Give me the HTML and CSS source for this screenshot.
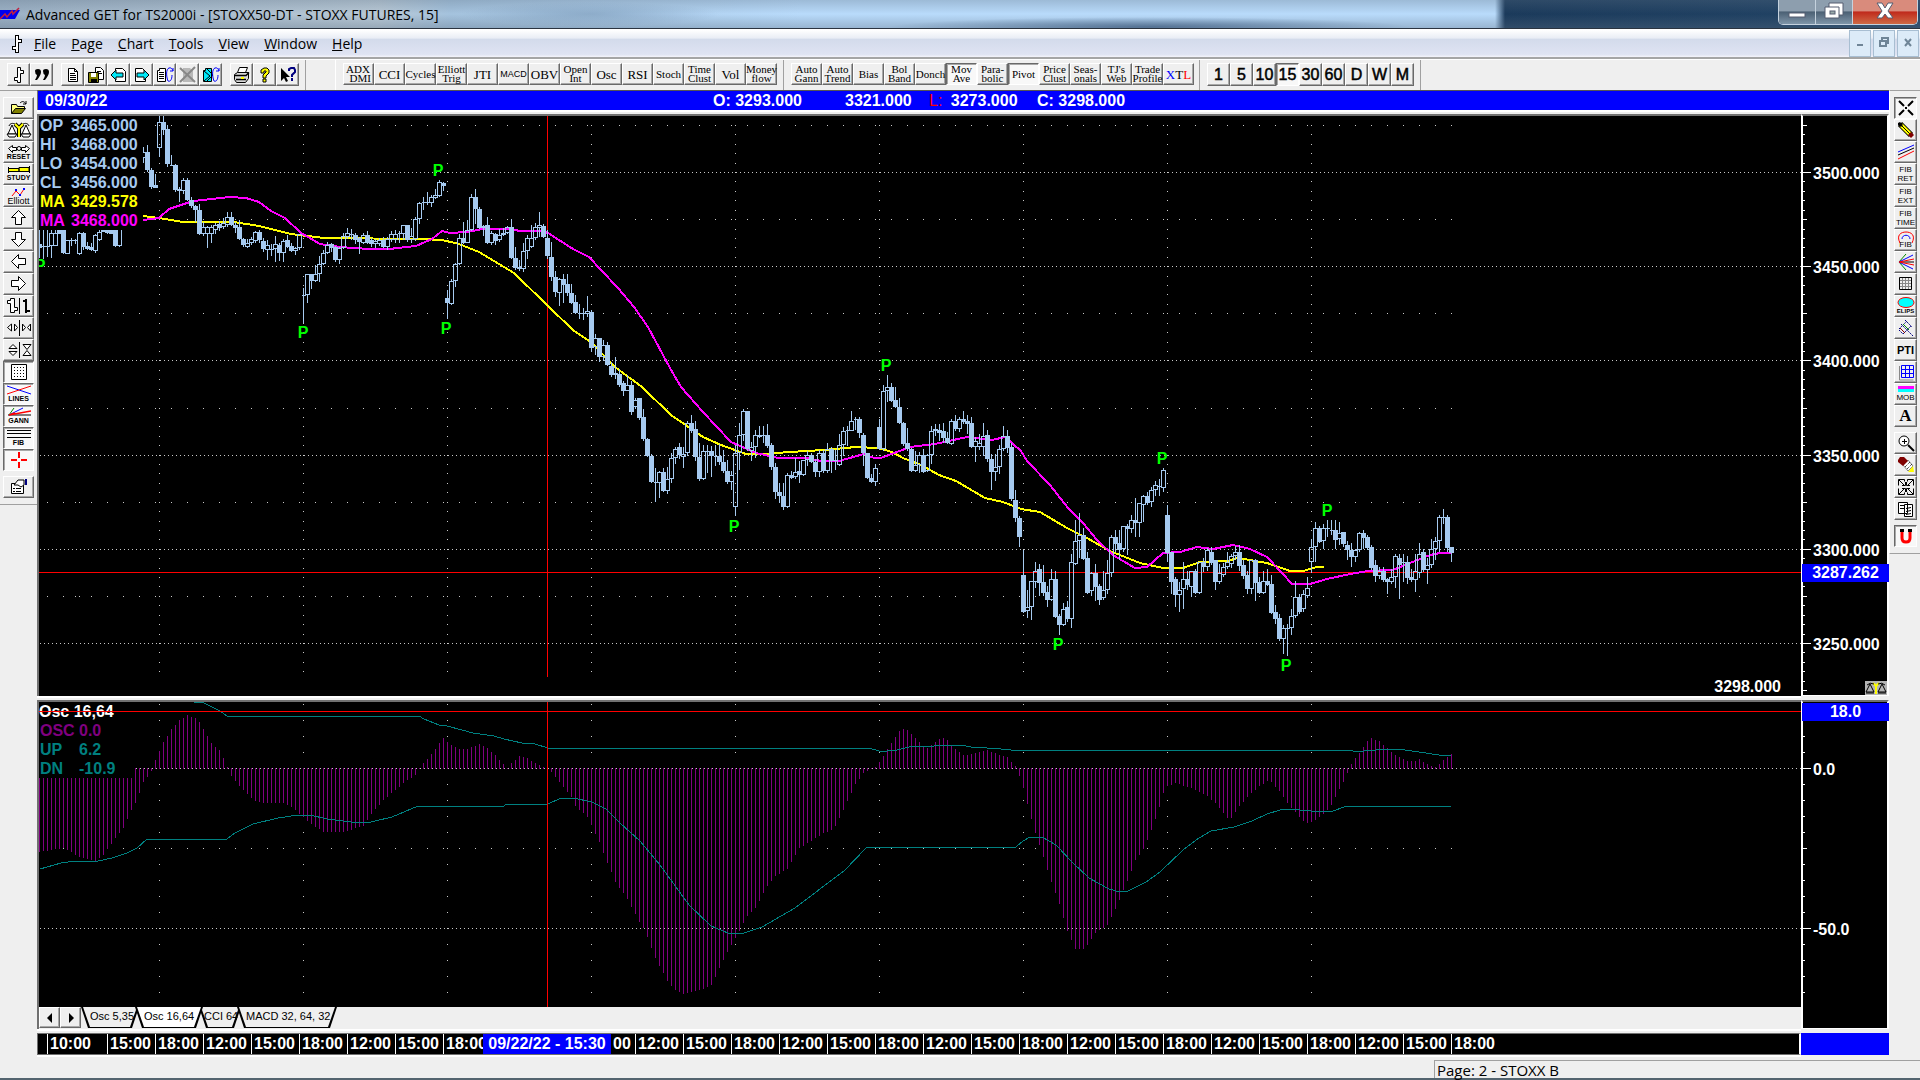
FILE: index.html
```html
<!DOCTYPE html>
<html lang="en">
<head>
    <meta charset="UTF-8">
    <meta name="viewport" content="width=device-width, initial-scale=1.0">
    <title>Advanced GET for TS2000i - [STOXX50-DT - STOXX FUTURES, 15]</title>
    <link rel="stylesheet" href="styles.css">
</head>
<body>
    <header class="titlebar">
        <svg class="app-icon" viewBox="0 0 20 16"><path d="M0 4h20l-5 9H0z" fill="#0000f0"/><path d="M0 13l5-5 2 3 5-6 1 3 6-6" fill="none" stroke="#c02040" stroke-width="1.5"/></svg>
        <h1 class="title">Advanced GET for TS2000i - [STOXX50-DT - STOXX FUTURES, 15]</h1>
        <div class="window-buttons">
            <button class="win-btn" aria-label="Minimize"><svg width="20" height="18"><rect x="2" y="11" width="16" height="4" fill="#fff" stroke="#555c70"/></svg></button>
            <button class="win-btn" aria-label="Restore"><svg width="20" height="18"><path d="M5 1h14v12h-4v3H1V5h4z" fill="#fff" stroke="#555c70"/><rect x="6" y="9" width="5" height="3" fill="#9aa" stroke="#555c70"/><path d="M5 5h10v8" fill="none" stroke="#555c70"/></svg></button>
            <button class="win-btn win-close" aria-label="Close"><svg width="20" height="18"><path d="M2 1h5l3 5 3-5h5l-5 8 5 7h-5l-3-4-3 4H2l5-7z" fill="#fff" stroke="#555c70"/></svg></button>
        </div>
    </header>

    <nav class="menubar">
        <svg class="doc-icon" width="12" height="20" shape-rendering="crispEdges"><path d="M4.500 1.500h3v4h3v3h-3v10h-3v-3h-3v-3h3z" fill="#fff" stroke="#000"/></svg>
        <a href="#"><u>F</u>ile</a>
        <a href="#"><u>P</u>age</a>
        <a href="#"><u>C</u>hart</a>
        <a href="#"><u>T</u>ools</a>
        <a href="#"><u>V</u>iew</a>
        <a href="#"><u>W</u>indow</a>
        <a href="#"><u>H</u>elp</a>
        <div class="mdi-buttons">
            <button class="mdi-btn" aria-label="Minimize page"><svg width="12" height="12"><path d="M3 9h6" stroke="#6f8597" stroke-width="2"/></svg></button>
            <button class="mdi-btn" aria-label="Restore page"><svg width="12" height="12"><path d="M4 4V2h6v5H8M2 5h6v5H2z" fill="none" stroke="#6f8597" stroke-width="2"/></svg></button>
            <button class="mdi-btn" aria-label="Close page"><svg width="12" height="12"><path d="M3 3l6 7M9 3l-6 7" stroke="#6f8597" stroke-width="2"/></svg></button>
        </div>
    </nav>

    <div class="toolbar">
        <div class="tool-group group-file">
            <button class="tb sq" aria-label="Bar"><svg width="18" height="18"><path d="M7.500 1.500h3v3h3v3h-3v9h-3v-2h-3v-3h3z" fill="#fff" stroke="#000"/></svg></button>
            <button class="tb sq" aria-label="Quotes"><svg width="18" height="18"><path d="M2 5q0-2 3-2t3 3-4 8H2q2-3 2-5-2-1-2-4zM10 5q0-2 3-2t3 3-4 8h-2q2-3 2-5-2-1-2-4z" fill="#000"/></svg></button>
            <span class="tool-space"></span>
            <button class="tb sq" aria-label="New page"><svg width="18" height="18"><path d="M4.500 2.500h6l3 3v10h-9z" fill="#fff" stroke="#000"/><path d="M10.500 2.500v3h3M6 7.500h5M6 9.500h6M6 11.500h6M6 13.500h6" fill="none" stroke="#000"/></svg></button>
            <button class="tb sq" aria-label="Save page"><svg width="18" height="18"><path d="M8.500 1.500h5l3 3v9h-8z" fill="#fff" stroke="#000"/><path d="M10 5.500h4M10 7.500h5" stroke="#000"/><path d="M1.500 6.500h10v10h-10z" fill="#808000" stroke="#000"/><path d="M4 7h5v4H4z" fill="#fff"/><path d="M4 13h6v4H4z" fill="#000"/></svg></button>
            <button class="tb sq" aria-label="Previous page"><svg width="18" height="18"><path d="M5.500 2.500h7l3 3v10h-10z" fill="#fff" stroke="#000"/><path d="M1 9l5-5v3h7v4H6v3z" fill="#00e8f8" stroke="#000"/></svg></button>
            <button class="tb sq" aria-label="Next page"><svg width="18" height="18"><path d="M2.500 2.500h7l3 3v10h-10z" fill="#fff" stroke="#000"/><path d="M16 9l-5-5v3H4v4h7v3z" fill="#00e8f8" stroke="#000"/></svg></button>
            <button class="tb sq" aria-label="Refresh page"><svg width="18" height="18"><path d="M1.500 4.500h2v-2h6v13h-8z" fill="#fff" stroke="#000"/><path d="M3 6.500h5M3 8.500h5M3 10.500h5M3 12.500h5" stroke="#000"/><path d="M12 15c-2-5-2-12 1-13s4 3 4 3M14 5h3V2M12 15c2 1 4-1 4-6" fill="none" stroke="#00f"/></svg></button>
            <button class="tb sq" aria-label="Delete page"><svg width="18" height="18"><path d="M4 2h7l3 3v11H4z" fill="#b8b8b8"/><path d="M1 2l15 14M16 1L1 16" stroke="#888" stroke-width="2"/></svg></button>
            <button class="tb sq" aria-label="Refresh all"><svg width="18" height="18"><path d="M1.500 4.500h2v-2h6v13h-8z" fill="#00e8f8" stroke="#000"/><path d="M2 5l6 5-6 5M5 3l6 6-6 6" fill="none" stroke="#000"/><path d="M12 15c-2-5-2-12 1-13s4 3 4 3M14 5h3V2M12 15c2 1 4-1 4-6" fill="none" stroke="#00f"/></svg></button>
            <span class="tool-space"></span>
            <button class="tb sq" aria-label="Print"><svg width="18" height="18"><path d="M6.500 1.500h8l-2 5h-8z" fill="#fff" stroke="#000"/><path d="M1.500 8.500l3-2h11v6l-3 4h-9l-2-3z" fill="#d8d8d8" stroke="#000"/><path d="M2 9.500h11l3-3M3 13.500h10" fill="none" stroke="#000" stroke-width="1.500"/><path d="M8 11h3v2H8z" fill="#ff0"/></svg></button>
            <button class="tb sq" aria-label="Help topics"><svg width="18" height="18"><path d="M5 7V4l3-2h3l2 2v3l-3 3v2H7V9l3-3V5H8v2zM7 13h3v3H7z" fill="#ff0" stroke="#000"/></svg></button>
            <button class="tb sq" aria-label="Context help"><svg width="18" height="18"><path d="M2 2v13l3-3 2 4 2-1-2-4h4z" fill="#000"/><path d="M10 5V3l2-1h3l1 2v2l-3 3v2M13 12v3" fill="none" stroke="#000080" stroke-width="2"/></svg></button>
        </div>
        <div class="tool-group group-study">
            <button class="tb adx"><span>ADX</span><span>DMI</span></button>
            <button class="tb big">CCI</button>
            <button class="tb">Cycles</button>
            <button class="tb">Elliott<br>Trig</button>
            <button class="tb big">JTI</button>
            <button class="tb sans">MACD</button>
            <button class="tb big">OBV</button>
            <button class="tb">Open<br>Int</button>
            <button class="tb big">Osc</button>
            <button class="tb big">RSI</button>
            <button class="tb">Stoch</button>
            <button class="tb">Time<br>Clust</button>
            <button class="tb big">Vol</button>
            <button class="tb">Money<br>flow</button>
        </div>
        <div class="tool-group group-overlay">
            <button class="tb">Auto<br>Gann</button>
            <button class="tb">Auto<br>Trend</button>
            <button class="tb">Bias</button>
            <button class="tb">Bol<br>Band</button>
            <button class="tb">Donch</button>
            <button class="tb pressed" aria-pressed="true">Mov<br>Ave</button>
            <button class="tb">Para-<br>bolic</button>
            <button class="tb pressed" aria-pressed="true">Pivot</button>
            <button class="tb">Price<br>Clust</button>
            <button class="tb">Seas-<br>onals</button>
            <button class="tb">TJ's<br>Web</button>
            <button class="tb">Trade<br>Profile</button>
            <button class="tb big xtl"><i>X</i>T<b>L</b></button>
        </div>
        <div class="tool-group group-period">
            <button class="tb sq period">1</button>
            <button class="tb sq period">5</button>
            <button class="tb sq period">10</button>
            <button class="tb sq period pressed" aria-pressed="true">15</button>
            <button class="tb sq period">30</button>
            <button class="tb sq period">60</button>
            <button class="tb sq period">D</button>
            <button class="tb sq period">W</button>
            <button class="tb sq period">M</button>
        </div>
    </div>

    <main class="workspace">
        <aside class="side side-left">
            <button class="tb" aria-label="Open"><svg width="24" height="16"><path d="M4.500 13.500v-9h5l1 2h7v3" fill="#ffff80" stroke="#000"/><path d="M4.500 13.500l4-5h10l-4 5z" fill="#808000" stroke="#000"/><path d="M13 3c2-2 4-2 6 1M19 1v3h-3" fill="none" stroke="#000"/></svg></button>
            <button class="tb" aria-label="Scales"><svg width="26" height="18"><path d="M9 3l4 4 4-4M13 6v10" fill="none" stroke="#000" stroke-width="4"/><path d="M9 3l4 4 4-4M13 6v10" fill="none" stroke="#ff0" stroke-width="2"/><path d="M3 5c1-3 4-3 6-2M23 5c-1-3-4-3-6-2" fill="none" stroke="#000"/><path d="M6 4l-4 9h8zM20 4l-4 9h8z" fill="#fff" stroke="#000"/><path d="M1 13h10l-2 3H3zM15 13h10l-2 3h-6z" fill="#fff" stroke="#000"/></svg></button>
            <button class="tb col"><svg width="24" height="9"><path d="M1.500 4.500l4-3v2h4v3h-4v2zM22.500 4.500l-4-3v2h-4v3h4v2z" fill="#fff" stroke="#000"/><circle cx="12" cy="4.500" r="2" fill="#fff" stroke="#000"/></svg><span>RESET</span></button>
            <button class="tb col"><svg width="24" height="8"><path d="M1.500 1v6M22.500 0v7M2 2.500h10v3H2M12 1.500h10v4H12z" fill="#ff0" stroke="#000"/></svg><span>STUDY</span></button>
            <button class="tb col"><svg width="24" height="9"><path d="M5 8l4-5 4 4 4-6" fill="none" stroke="#f00"/><path d="M8 1h2v2H8zM12 6h2v2h-2zM16 0h2v2h-2z" fill="#00f"/></svg><span class="mixed">Elliott</span></button>
            <button class="tb" aria-label="Up"><svg width="18" height="18"><path d="M8.500 1.500l7 7h-4v7h-6v-7h-4z" fill="#fff" stroke="#000"/></svg></button>
            <button class="tb" aria-label="Down"><svg width="18" height="18"><path d="M8.500 15.500l7-7h-4v-7h-6v7h-4z" fill="#fff" stroke="#000"/></svg></button>
            <button class="tb" aria-label="Left"><svg width="18" height="18"><path d="M1.500 8.500l7-7v4h7v6h-7v4z" fill="#fff" stroke="#000"/></svg></button>
            <button class="tb" aria-label="Right"><svg width="18" height="18"><path d="M15.500 8.500l-7-7v4h-7v6h7v4z" fill="#fff" stroke="#000"/></svg></button>
            <button class="tb" aria-label="Bar style"><svg width="26" height="18"><path d="M4.500 1.500h4v9h3v3h-3v2h-4v-9h-3v-3h3z" fill="#fff" stroke="#000"/><path d="M13.500 1v16" stroke="#000"/><path d="M20 2v14M17 4h3M20 14h4" stroke="#000" stroke-width="2"/></svg></button>
            <button class="tb" aria-label="Horizontal spacing"><svg width="26" height="18"><path d="M13.500 1v16M5.500 5v7l-4-3.500zM8.500 5v7l3-3.500zM16.500 5v7l3-3.500zM24.500 5v7l-3-3.500z" fill="#fff" stroke="#000"/></svg></button>
            <button class="tb" aria-label="Vertical spacing"><svg width="26" height="18"><path d="M13.500 1v16M3 7.500h8l-4-4zM3 10.500h8l-4 4zM17 3.500h8l-4 5zM17 14.500h8l-4-5z" fill="#fff" stroke="#000"/></svg></button>
            <button class="tb pressed" aria-pressed="true" aria-label="Grid"><svg width="18" height="18"><path d="M1.500 1.500h15v15h-15z" fill="#fff" stroke="#000"/><path d="M4 4.500h12M4 7.500h12M4 10.500h12M4 13.500h12" stroke="#000" stroke-dasharray="1 2"/></svg></button>
            <button class="tb col pressed" aria-pressed="true"><svg width="24" height="10"><path d="M0 1l24 8" stroke="#00f"/><path d="M0 9l24-8" stroke="#f00"/></svg><span>LINES</span></button>
            <button class="tb col pressed" aria-pressed="true"><svg width="24" height="10"><path d="M1 8h23" stroke="#000"/><path d="M2 8l5-7" stroke="#080"/><path d="M2 8l14-7" stroke="#00f"/><path d="M2 8l22-4M2 8l6-2" stroke="#f00" stroke-width="1.500"/></svg><span>GANN</span></button>
            <button class="tb col pressed" aria-pressed="true"><svg width="24" height="10"><path d="M0 1.500h24M0 4.500h24M0 8.500h24" stroke="#000"/></svg><span>FIB</span></button>
            <button class="tb pressed" aria-pressed="true" aria-label="Crosshair"><svg width="18" height="18"><path d="M1 9h6M11 9h6M9 1v6M9 11v6" stroke="#f00" stroke-width="2"/></svg></button>
            <span class="side-space"></span>
            <button class="tb" aria-label="Properties"><svg width="20" height="18"><path d="M2.500 5.500h12v10h-12z" fill="#fff" stroke="#000"/><path d="M4 10.500h2M7 10.500h5M4 13.500h2M7 13.500h5M5 7l4-5h6v5l-3 2-3-2z" fill="#fff" stroke="#000"/><path d="M16 1h2v6h-2z" fill="#000080"/></svg></button>
        </aside>

        <section class="charts">
            <div class="infobar">
                <span class="info-date">09/30/22</span>
                <span class="info-open">O: 3293.000</span>
                <span class="info-high">3321.000</span>
                <span class="info-low"><em>L:</em> 3273.000</span>
                <span class="info-close">C: 3298.000</span>
            </div>

            <div class="pane price-pane">
                <svg class="plot" id="price"></svg>
                <dl class="readout">
                    <dt>OP</dt><dd>3465.000</dd>
                    <dt>HI</dt><dd>3468.000</dd>
                    <dt>LO</dt><dd>3454.000</dd>
                    <dt>CL</dt><dd>3456.000</dd>
                    <dt class="ma1">MA</dt><dd class="ma1">3429.578</dd>
                    <dt class="ma2">MA</dt><dd class="ma2">3468.000</dd>
                </dl>
                <span class="last-price">3298.000</span>
            </div>
            <div class="axis price-axis">
                <svg class="plot" id="priceScale"></svg>
                <span class="axis-mark price-mark">3287.262</span>
                <svg class="scales-badge" width="22" height="14"><path d="M0 0h22v14H0z" fill="#b4b4b4"/><path d="M8 2l3 3 3-3M11 5v8" fill="none" stroke="#ff0" stroke-width="2"/><path d="M2 4q3-3 7-1M20 4q-3-3-7-1M5 3l-4 8h8zM17 3l-4 8h8zM1 12h8M13 12h8" fill="none" stroke="#000"/></svg>
            </div>

            <div class="pane osc-pane">
                <div class="osc-body">
                    <svg class="plot" id="osc"></svg>
                    <div class="readout osc-readout">
                        <h2>Osc 16,64</h2>
                        <dl>
                            <dt class="osc">OSC</dt><dd class="osc">0.0</dd>
                            <dt>UP</dt><dd>6.2</dd>
                            <dt>DN</dt><dd>-10.9</dd>
                        </dl>
                    </div>
                    <span class="osc-cross"></span>
                </div>
                <div class="tabs">
                    <button class="tb tab-nav" aria-label="Previous tab"><svg width="8" height="10"><path d="M6 0v10L1 5z"/></svg></button>
                    <button class="tb tab-nav" aria-label="Next tab"><svg width="8" height="10"><path d="M2 0v10l5-5z"/></svg></button>
                    <button class="tab tab-osc5"><span>Osc 5,35</span></button>
                    <button class="tab tab-osc16 active"><span>Osc 16,64</span></button>
                    <button class="tab tab-cci"><span>CCI 64</span></button>
                    <button class="tab tab-macd"><span>MACD 32, 64, 32</span></button>
                </div>
            </div>
            <div class="axis osc-axis">
                <svg class="plot" id="oscScale"></svg>
                <span class="axis-mark osc-mark">18.0</span>
            </div>

            <div class="time-axis" id="times"></div>
            <div class="time-corner"></div>
        </section>

        <aside class="side side-right">
            <button class="tb pressed" aria-pressed="true" aria-label="Pointer"><svg width="18" height="18"><path d="M2 2l5 5M16 2l-5 5M2 16l5-5M16 16l-5-5" stroke="#000" stroke-width="2"/><path d="M8 8h2v2H8z"/></svg></button>
            <button class="tb" aria-label="Pencil"><svg width="18" height="18"><path d="M3 3l11 11" stroke="#000" stroke-width="6"/><path d="M4 4l9 9" stroke="#ff0" stroke-width="4"/><path d="M4 4l9 9" stroke="#000"/><path d="M1 2l2-1 3 3-2 2-3-2z"/><path d="M11 14l3-3 3 3-3 3z" fill="#800000"/></svg></button>
            <button class="tb" aria-label="Trend lines"><svg width="18" height="18"><path d="M1 9l16-7" stroke="#00f"/><path d="M1 12l16-7" stroke="#000"/><path d="M1 16l16-8" stroke="#f00"/></svg></button>
            <button class="tb fib">FIB<br>RET</button>
            <button class="tb fib">FIB<br>EXT</button>
            <button class="tb fib">FIB<br>TIME</button>
            <button class="tb fib fib-arc"><svg width="18" height="13"><path d="M3 12C-1 4 4 1 9 1s10 3 6 11" fill="none" stroke="#f00"/><path d="M5 8c0-5 8-5 8 0" fill="none" stroke="#00f"/></svg><span>FIB</span></button>
            <button class="tb" aria-label="Gann fan"><svg width="18" height="18"><path d="M2 9h15" stroke="#000"/><path d="M2 9l7-8M2 9l7 8" stroke="#080"/><path d="M2 9l14-7M2 9l14 7" stroke="#00f"/><path d="M2 9l15-3M2 9l15 3" stroke="#f00"/></svg></button>
            <button class="tb" aria-label="Gann box"><svg width="16" height="16"><path d="M4.500 2v12M7.500 2v12M10.500 2v12M2 4.500h12M2 7.500h12M2 10.500h12" stroke="#888"/><path d="M1.500 1.500h12v12h-12z" fill="none" stroke="#000"/></svg></button>
            <button class="tb col"><svg width="18" height="11"><ellipse cx="9" cy="5.500" rx="8" ry="5" fill="#0ff" stroke="#f00"/></svg><span>ELIPS</span></button>
            <button class="tb" aria-label="Pitchfork"><svg width="18" height="18"><path d="M4 5l12 12M8 1l7 7M2 11l4 4M2 10l8-8M6 15l8-8" stroke="#000080" stroke-dasharray="2 1"/><path d="M6 5l6 6" stroke="#080"/><path d="M3 9l5 5" stroke="#800000"/></svg></button>
            <button class="tb pti">PTI</button>
            <button class="tb" aria-label="Time grid"><svg width="18" height="18"><path d="M4.500 2.500h12v12h-12zM8.500 2v13M12.500 2v13M4 6.500h13M4 10.500h13" fill="none" stroke="#00f"/><path d="M2.500 3v14h14" fill="none" stroke="#888"/></svg></button>
            <button class="tb col mob"><svg width="16" height="7"><path d="M0 0h16v3H0z" fill="#f0f"/><path d="M0 3h16v3H0z" fill="#0ff"/></svg><span>MOB</span></button>
            <button class="tb letter">A</button>
            <span class="side-space"></span>
            <button class="tb" aria-label="Zoom"><svg width="18" height="18"><circle cx="7" cy="7" r="5" fill="#fff" stroke="#000"/><path d="M5 7.500h5M7.500 5v5" stroke="#000"/><path d="M11 11l6 6" stroke="#000" stroke-width="2"/></svg></button>
            <button class="tb" aria-label="Eraser"><svg width="18" height="18"><path d="M6 9l5-5 5 6-5 5z" fill="#fff" stroke="#888"/><path d="M1 4l2-3h4l4 4-5 5-5-4z" fill="#800000"/><path d="M8 11l5-5M10 13l5-5" stroke="#000" stroke-dasharray="1 1"/><path d="M11 16l5-6 1 6z" fill="#ff0"/></svg></button>
            <button class="tb" aria-label="Expand"><svg width="18" height="18"><path d="M1.500 7.500v-6h6v2M10.500 3.500v-2h6v6M1.500 10.500v6h6v-2M10.500 14.500v2h6v-6M2 2l6 6M16 2l-6 6M2 16l6-6M16 16l-6-6M8.500 4v3.500H5M9.500 4v3.500H13M8.500 14v-3.500H5M9.500 14v-3.500H13" fill="none" stroke="#000"/></svg></button>
            <button class="tb" aria-label="Copy"><svg width="18" height="18"><path d="M1.500 2.500h9v11h-9zM7.500 4.500h8v12h-8z" fill="#fff" stroke="#000"/><path d="M3 5.500h4M3 8.500h4M9 8.500l5-1M9 11.500l5-1M9 14.500l5-1" stroke="#000"/></svg></button>
            <span class="side-space"></span>
            <button class="tb pressed" aria-pressed="true" aria-label="Magnet"><svg width="18" height="18"><path d="M5 4v7q0 4 4 4t4-4V4" fill="none" stroke="#f00" stroke-width="3"/><path d="M3 2h4v3H3zM11 2h4v3h-4z"/></svg></button>
        </aside>
    </main>

    <footer class="statusbar">
        <span class="status-page">Page: 2 - STOXX B</span>
    </footer>

    <script src="chart.js"></script>
</body>
</html>
```
FILE: styles.css
```css
* {
    box-sizing: border-box;
}
body {
    margin: 0;
    height: 100vh;
    display: flex;
    flex-direction: column;
    overflow: hidden;
    background-color: #efefef;
    color: #000;
    font-family: "Liberation Sans", Arial, sans-serif;
}
button {
    padding: 0;
    margin: 0;
    border: none;
    font-family: inherit;
    color: inherit;
}

/* title bar and menu */
.titlebar {
    height: 29px;
    flex: none;
    display: flex;
    align-items: center;
    border-bottom: 1px solid #2b3440;
    background:
        radial-gradient(ellipse 130px 12px at 590px 14px, rgba(110, 140, 170, 0.5), transparent),
        radial-gradient(ellipse 260px 10px at 1150px 27px, rgba(60, 90, 125, 0.75), transparent),
        linear-gradient(180deg, rgba(90, 110, 130, 0.3), transparent 50%, rgba(90, 110, 130, 0.35)),
        linear-gradient(90deg, #9db2c6 0, #b9c9d6 380px, #a5c3de 450px, #b9dbfb 800px, #b9dbfb 1495px, #1b3a5b 1505px, #234567 100%);
}
.app-icon {
    width: 20px;
    height: 16px;
    flex: none;
}
.title {
    flex: 1;
    margin: 0;
    padding-left: 6px;
    font: 14px "Open Sans", sans-serif;
}
.window-buttons {
    display: flex;
    align-self: flex-start;
    height: 25px;
    margin-right: 2px;
    border: 1px solid #c5d2de;
    border-top: none;
    border-radius: 0 0 5px 5px;
    overflow: hidden;
}
.win-btn {
    width: 37px;
    border-right: 1px solid #c5d2de;
    background: linear-gradient(#8d9eae 45%, #4b6074 50%, #7f95a8);
}
.win-close {
    width: 64px;
    border-right: none;
    background: linear-gradient(#d98b7c 45%, #c02a1c 50%, #cf6a45);
}
.menubar {
    height: 30px;
    flex: none;
    display: flex;
    align-items: center;
    gap: 15px;
    padding: 0 1px 0 11px;
    border-top: 1px solid #fff;
    border-bottom: 2px solid #a5a5a5;
    background: linear-gradient(#fff, #e9edf5 30%, #d3dbeb 34%, #dfe3f2 90%, #f4f4fa);
}
.menubar a {
    color: #000;
    text-decoration: none;
    font: 14px "Open Sans", sans-serif;
}
.doc-icon {
    margin-right: -4px;
}
.mdi-buttons {
    display: flex;
    gap: 2px;
    margin-left: auto;
}
.mdi-btn {
    width: 22px;
    height: 27px;
    border: 1px solid #a8bed2;
    background-color: #dcebf8;
}

/* raised buttons shared by all the tool bars */
.tb {
    width: 31px;
    height: 22px;
    flex: none;
    display: flex;
    align-items: center;
    justify-content: center;
    border: 1px solid;
    border-color: #fff #696969 #696969 #fff;
    box-shadow: inset -1px -1px 0 #a8a8a8;
    background-color: #efefef;
    font: 11px/9px "Liberation Serif", serif;
    text-align: center;
}
.tb.pressed {
    border-color: #696969 #fff #fff #696969;
    box-shadow: inset 1px 1px 0 #a8a8a8;
    background-color: #f8f8f8;
}
.tb.sq {
    width: 23px;
    height: 23px;
}
.tb.big {
    font-size: 13px;
}
.tb.sans {
    font: 9px "Liberation Sans", sans-serif;
}
.tb.adx {
    flex-direction: column;
}
.adx span:first-child {
    align-self: flex-start;
    padding-left: 2px;
}
.adx span:last-child {
    align-self: flex-end;
    padding-right: 2px;
}
.tb.period {
    font: 16px "Liberation Sans", sans-serif;
    -webkit-text-stroke: 0.5px #000;
}
.xtl i {
    color: #00f;
    font-style: normal;
}
.xtl b {
    color: #f00;
    font-weight: normal;
}
.tb.col {
    flex-direction: column;
    font: bold 7px/8px "Liberation Sans", sans-serif;
}
.tb .mixed {
    font-size: 9px;
    font-weight: normal;
}
.toolbar {
    height: 31px;
    flex: none;
    display: flex;
    border-top: 1px solid #fff;
}
.tool-group {
    display: flex;
    align-items: flex-start;
    padding: 3px 6px 0 7px;
    border-right: 1px solid #a0a0a0;
}
.tool-space {
    width: 8px;
}
.group-file {
    margin-right: 29px;
}
.group-study {
    border-left: 1px solid #fff;
}
.group-overlay {
    padding-right: 5px;
}

/* workspace */
.workspace {
    flex: 1;
    min-height: 0;
    display: flex;
}
.side {
    flex: none;
    display: flex;
    flex-direction: column;
    align-self: flex-start;
    padding: 6px 0 6px 3px;
    border-top: 1px solid #a0a0a0;
    border-bottom: 1px solid #a0a0a0;
}
.side-left {
    width: 37px;
}
.side-right {
    width: 31px;
    padding-left: 4px;
    border-left: 1px solid #fff;
}
.side-right .tb {
    width: 23px;
}
.side-space {
    height: 5px;
}
.side-right .fib {
    font: 8px/9px "Liberation Sans", sans-serif;
}
.tb.fib-arc {
    flex-direction: column;
}
.fib-arc span {
    margin-top: -4px;
}
.side-right .col {
    font-size: 6px;
    line-height: 7px;
}
.side-right .mob {
    font: 8px/10px "Liberation Sans", sans-serif;
}
.tb.pti {
    font: bold 11px "Liberation Sans", sans-serif;
}
.tb.letter {
    font: bold 17px "Liberation Serif", serif;
}
.charts {
    flex: 1;
    min-width: 0;
    display: grid;
    grid-template-columns: 1fr 88px;
    grid-template-rows: 20px minmax(0, 582fr) minmax(0, 329fr) 22px;
    row-gap: 4px;
    padding-bottom: 2px;
    font-size: 16px;
    font-weight: bold;
}
.infobar {
    grid-column: 1 / -1;
    display: flex;
    align-items: center;
    padding-left: 7px;
    border-top: 1px solid #555;
    border-left: 1px solid #777;
    box-shadow: 0 2px 0 #fff;
    background-color: #00f;
    color: #fff;
    line-height: 19px;
    white-space: pre;
}
.info-date {
    width: 668px;
}
.info-open {
    width: 132px;
}
.info-high {
    width: 84px;
}
.info-low {
    width: 108px;
}
.info-low em {
    color: #f00;
    font-style: normal;
    font-weight: normal;
    margin-right: 4px;
}
.pane {
    position: relative;
    min-width: 0;
    border-top: 2px solid #707070;
    border-left: 2px solid #707070;
    box-shadow: 0 2px 0 #fff;
    background-color: #000;
}
.plot {
    display: block;
    position: absolute;
    inset: 0;
    width: 100%;
    height: 100%;
    shape-rendering: crispEdges;
    font: bold 16px "Liberation Sans", Arial, sans-serif;
}
.readout {
    position: absolute;
    top: 0;
    left: 0;
    width: 104px;
    display: grid;
    grid-template-columns: 31px 1fr;
    margin: 0;
    padding-left: 1px;
    background-color: #000;
    color: #a6caf0;
    line-height: 19px;
}
.readout dd {
    margin: 0;
}
.readout .ma1 {
    color: #ff0;
}
.readout .ma2 {
    color: #f0f;
}
.osc-readout {
    display: block;
    width: 94px;
    padding-left: 0;
    color: #008080;
}
.osc-readout h2 {
    margin: 0;
    color: #fff;
    font-size: 16px;
}
.osc-readout dl {
    display: grid;
    grid-template-columns: 39px 1fr;
    margin: 0;
    padding-left: 1px;
}
.osc-readout .osc {
    color: #800080;
}
.osc-cross {
    position: absolute;
    top: 9px;
    left: 0;
    width: 100%;
    border-top: 1px solid #f00;
}
.last-price {
    position: absolute;
    right: 20px;
    bottom: 0;
    line-height: 18px;
    color: #fff;
}
.axis {
    position: relative;
    border: 2px solid #fff;
    border-top-color: #707070;
    border-bottom-width: 1px;
    background-color: #000;
}
.axis-mark {
    position: absolute;
    left: -1px;
    right: -2px;
    height: 18px;
    background-color: #00f;
    color: #fff;
    line-height: 18px;
    text-align: center;
}
.price-mark {
    top: 448px;
}
.osc-mark {
    top: 1px;
}
.scales-badge {
    position: absolute;
    right: 0;
    bottom: 0;
}
.osc-pane {
    display: flex;
    flex-direction: column;
}
.osc-body {
    position: relative;
    flex: 1;
}

/* study tabs */
.tabs {
    display: flex;
    height: 22px;
    background-color: #efefef;
}
.tab-nav {
    width: 21px;
    height: 21px;
}
.tab {
    position: relative;
    height: 21px;
    margin-right: -4px;
    padding: 0 0 4px 9px;
    background-color: #000;
    clip-path: polygon(0 0, 100% 0, calc(100% - 7px) 100%, 7px 100%);
    font-size: 11px;
    text-align: left;
}
.tab::before {
    content: "";
    position: absolute;
    inset: 0 2px 1px 2px;
    background-color: #efefef;
    clip-path: polygon(0 0, 100% 0, calc(100% - 7px) 100%, 7px 100%);
}
.tab span {
    position: relative;
}
.tab.active {
    z-index: 1;
}
.tab.active::before {
    background-color: #fff;
}
.tab-osc5 {
    width: 58px;
}
.tab-osc16 {
    width: 68px;
}
.tab-cci {
    width: 42px;
    padding-left: 5px;
}
.tab-macd {
    width: 100px;
}

/* time scale */
.time-axis {
    display: flex;
    min-width: 0;
    padding-left: 9px;
    border: 1px solid #707070;
    border-right: 2px solid #fff;
    box-shadow: 0 2px 0 #fff;
    background-color: #000;
    color: #fff;
    line-height: 20px;
    overflow: hidden;
}
.time-axis span {
    flex: none;
    width: 48px;
    padding-left: 2px;
    border-left: 1px solid #fff;
}
.time-axis .long {
    width: 60px;
}
/* labels on both sides of the cursor time */
.time-axis .cut {
    width: 40px;
    overflow: hidden;
}
.time-axis .rest {
    width: 24px;
    border-left: none;
}
.time-axis .time-mark {
    width: 128px;
    padding: 0;
    border: none;
    background-color: #00f;
    text-align: center;
}
.time-corner {
    background-color: #00f;
}

.statusbar {
    height: 23px;
    flex: none;
    display: flex;
    padding-top: 3px;
    border-bottom: 2px solid #53646f;
    font: 15px/18px "Open Sans", sans-serif;
}
.status-page {
    width: 486px;
    margin-left: auto;
    padding-left: 2px;
    border-top: 1px solid #a0a0a0;
    border-left: 1px solid #a0a0a0;
}
```
FILE: chart.js
```js
// window coordinates of the plot areas; one bar is 4px wide, 36 bars per day
const LEFT = 39, PRICE_TOP = 116, OSC_TOP = 702;
const FIRST_DAY = 159, DAY = 144, BAR = 4, LAST_BAR = 1451;

// one entry per bar: high, body top, body bottom, low ("-" closes lower, "+" higher)
// the first number is the bar index, day one starts at 0
const runs = [
    [-30, `-230 244 248 258,+230 246 247 259,+230 246 247 257,+230 233 246 258,+228 233 246 246,-225 225 234 234,-228 228 253 254,+240 240 254 254,+238 240 241 246,+239 240 241 244,+232 233 254 255,-232 233 247 250,-242 246 249 250,-243 247 250 251,+234 235 251 253,+230 232 240 241,-228 228 232 232,-228 228 233 234,-228 229 234 234,-229 230 246 247,+229 229 246 247`],
    [-4, `+147 152 158 163,-145 152 170 172,-168 170 187 189,-174 185 188 188`],
    [0, `+112 122 148 157,-112 122 130 135,-125 129 164 167,+155 165 166 166,-164 165 190 192,-187 189 191 202,+178 180 191 194,-178 180 200 201,-197 200 206 208,-205 206 210 222,-204 210 234 235,+222 227 234 236,+226 227 234 248,+225 227 234 243,+223 225 230 234,-221 224 228 231,+218 223 227 229,+212 217 225 227,-212 217 225 226,-222 225 228 233,-220 227 239 240,-238 239 245 247,+239 243 247 248,+237 239 243 245,+231 232 241 243,-230 232 240 243,-238 241 249 252,+240 245 250 260,+244 249 250 256,+236 244 249 262,-243 245 253 261,+239 241 253 262,-235 240 247 248,-243 246 251 252,+247 248 251 255,+234 234 248 250`],
    [36, `+288 295 296 323,+274 274 295 303,-274 274 281 289,+265 274 281 282,+256 264 274 282,+250 253 264 265,+242 245 253 254,-243 244 248 252,-246 247 260 262,+247 248 260 264,+233 236 248 249,+228 233 237 239,+229 234 235 240,-233 235 240 244,-237 238 242 254,+233 235 243 244,-231 235 243 244,-238 240 244 247,+239 241 244 248,+238 240 244 246,-237 240 247 248,+237 239 247 250,+231 234 240 242,+230 234 240 243,+231 233 234 243,+225 225 234 240,-225 225 240 242,+228 236 240 243,+217 219 239 241,+202 203 219 224,+197 202 203 210,+192 202 203 205,+195 197 203 207,+189 195 198 199,+180 182 196 197,-182 183 186 191`],
    [72, `-290 298 303 319,+279 281 304 305,+263 264 281 287,+234 238 264 265,-222 238 243 244,+220 230 243 243,+194 197 230 231,-189 197 209 224,-207 209 228 229,+225 226 228 236,-217 225 243 244,+231 233 243 245,-233 234 241 245,+229 235 240 242,+228 233 235 236,+226 227 233 234,-219 227 258 259,-247 258 268 270,+260 267 269 271,+243 251 269 272,+235 238 251 259,+225 238 247 248,+223 227 238 240,+212 225 228 237,-224 226 237 238,-230 238 256 259,-242 257 277 281,-271 277 292 297,+278 279 293 306,-274 279 285 303,-274 284 293 296,-284 293 303 304,-295 302 313 314,+304 313 314 319,+308 313 314 320,+296 311 314 317`],
    [108, `-310 312 348 352,+334 338 347 355,-338 338 357 362,+340 345 357 361,-342 345 365 366,-362 366 375 377,+357 373 375 379,-369 374 385 387,-381 383 391 396,+375 385 391 391,-381 385 412 415,+398 400 407 409,-398 398 418 420,-409 417 439 441,-438 439 456 457,-454 456 482 483,+468 482 483 502,+471 472 483 498,-468 472 491 492,+467 479 491 494,+453 458 479 483,+447 449 458 464,-443 447 455 459,+447 454 457 468,+421 423 453 456,-415 423 431 433,-421 429 457 461,-443 457 479 481,+445 451 479 480,+445 451 452 473,-446 451 456 477,+445 456 457 466,-444 456 462 465,-450 462 471 473,-460 471 482 484,+471 475 482 490`],
    [144, `+445 453 507 516,+423 435 453 470,+409 411 435 441,-411 411 449 451,+442 447 451 461,+430 435 447 458,+426 435 437 438,+426 435 436 443,-424 435 446 448,-443 445 467 470,-463 467 492 499,-483 492 496 503,-483 496 507 510,+473 475 507 508,-471 475 478 479,+458 472 477 479,-461 471 475 483,+460 460 475 476,+451 455 460 466,-453 455 462 463,-459 462 472 477,+450 453 472 477,-450 453 471 473,+443 449 471 473,-447 449 461 473,+450 460 461 470,+434 445 465 466,+427 431 445 456,+426 430 431 446,+411 421 431 431,+417 419 420 430,-417 419 433 438,-433 435 453 466,-453 453 478 479,-474 478 482 483,+464 468 482 486`],
    [180, `-419 427 449 450,+385 391 449 451,+375 387 391 402,-383 387 401 402,-387 400 407 408,-398 407 423 424,-422 423 444 446,-428 443 449 451,-448 449 471 472,+451 465 471 472,+452 455 465 473,-449 455 472 473,+454 455 471 472,+426 431 455 464,+424 429 431 436,-424 430 433 441,-423 431 438 443,-432 438 443 444,+419 421 444 445,-415 421 429 431,+417 419 429 432,-411 419 422 424,-415 421 424 434,-417 423 447 448,+437 441 447 462,+434 443 447 450,+423 436 447 456,-430 435 459 462,-454 459 472 490,+454 467 472 481,+445 449 467 474,+426 436 449 451,-430 436 448 453,-443 447 499 501,-490 500 518 522,-516 518 537 547`],
    [216, `-550 575 612 613,+590 607 611 618,+581 581 607 620,+562 571 582 588,-564 569 583 596,-565 582 593 596,-586 592 600 607,+569 579 600 601,-571 579 617 618,-614 616 625 635,+603 609 625 626,-601 607 619 622,+554 562 619 628,+520 541 564 565,+513 535 541 558,-528 535 559 560,-552 558 593 594,+572 573 591 596,-564 573 587 601,-584 586 600 605,+571 590 598 600,+560 573 590 594,+535 537 573 577,-530 537 544 552,-530 543 550 560,+526 526 549 552,-524 526 529 555,+515 520 529 533,-498 520 523 537,+503 503 523 537,+495 496 505 522,-492 496 503 505,+487 490 502 507,+481 485 490 496,+479 486 487 496,+468 470 488 492`],
    [252, `-505 515 553 562,-552 552 582 594,-577 579 595 607,+582 590 595 612,+562 579 589 609,-571 579 585 590,+571 571 587 597,-569 571 593 594,+562 562 593 594,-558 562 567 572,+548 550 567 571,-547 552 563 565,-560 560 582 590,+564 573 582 584,+563 567 575 577,+552 562 567 569,+554 556 564 568,+546 552 556 560,-545 552 566 571,-560 565 576 579,-571 575 589 594,+560 560 589 594,-559 560 583 601,-577 582 593 594,+571 581 593 594,-569 581 585 586,-575 584 613 614,-605 612 619 624,-614 618 639 641,+625 628 639 654,+624 628 629 656,+609 616 628 635,+581 597 616 618,-594 597 612 614,+590 594 609 612,+577 588 596 598`],
    [288, `+539 547 562 573,+522 528 547 562,-526 528 542 543,+524 528 541 549,+520 528 529 537,+520 530 531 535,-520 530 540 549,+522 533 539 545,-532 532 544 547,-541 545 550 560,-543 550 557 567,+549 550 557 562,+532 533 550 552,-530 533 538 549,-535 537 548 550,-545 547 568 570,-560 565 576 582,+567 571 576 579,-567 571 580 582,-578 579 582 594,+569 577 582 584,+554 556 577 588,-554 558 565 599,+554 562 563 582,-556 562 578 584,-569 577 580 582,+554 571 580 592,+543 554 573 578,-549 552 570 572,+558 565 570 584,+539 549 565 568,+537 541 549 560,+515 517 541 552,+509 517 518 524,-515 517 548 552,-547 547 553 562`]
];

const ma1 = "143,216 159,218 183,222 234,222 259,226 291,234 324,238 422,239 442,240 459,244 479,252 514,273 548,306 573,330 592,343 615,367 642,387 671,415 703,437 721,445 746,454 764,454 789,452 824,450 856,447 878,448 892,452 903,458 921,465 939,475 956,481 985,498 1003,502 1021,509 1040,512 1067,528 1087,538 1110,551 1140,563 1163,568 1183,568 1200,562 1227,561 1238,558 1267,563 1290,571 1303,571 1317,567 1324,567";
const ma2 = "143,220 159,218 169,209 193,201 230,197 246,198 259,202 271,211 285,218 301,233 320,244 340,247 369,249 389,249 416,246 432,239 442,231 450,233 467,232 483,229 510,229 520,231 542,231 548,233 573,249 589,257 601,270 618,288 634,307 648,327 670,368 681,387 703,412 731,442 756,453 778,458 806,458 821,461 839,461 864,454 874,458 881,458 910,447 935,444 967,437 992,440 1005,437 1021,451 1027,461 1050,485 1068,508 1083,523 1097,540 1113,555 1123,561 1135,568 1147,567 1163,553 1180,552 1197,547 1213,549 1233,545 1250,549 1267,557 1283,574 1292,584 1310,584 1327,579 1350,574 1368,571 1393,570 1410,563 1430,555 1440,553 1451,553";
const up = "194,702 204,703 220,711 227,716 419,716 424,719 439,725 447,726 473,733 494,736 504,739 522,743 535,744 548,748 869,748 879,751 887,751 897,750 909,747 934,746 942,745 960,745 971,747 987,748 1001,749 1011,750 1349,750 1357,752 1364,751 1376,750 1398,749 1419,752 1439,755 1451,755";
const down = "40,869 61,863 75,861 98,861 112,858 127,853 137,848 147,839 227,839 235,833 253,824 278,818 298,815 310,815 327,819 351,822 371,822 392,817 418,806 504,806 506,804 548,804 559,799 573,798 592,802 606,809 620,823 640,841 660,865 689,905 711,926 728,933 744,933 762,927 795,908 820,889 844,871 867,847 1016,847 1023,841 1030,837 1042,837 1056,845 1073,863 1089,878 1109,889 1120,892 1128,891 1146,882 1160,872 1183,850 1199,838 1211,831 1234,827 1252,821 1267,814 1280,810 1288,809 1311,811 1333,811 1347,806 1451,806";
// ends of the oscillator bars, the bars between two points are interpolated
const hist = "39,852 51,850 62,848 71,852 79,857 95,861 103,855 115,838 123,828 131,810 135,803 143,782 151,771 155,760 159,751 163,742 171,729 179,720 187,715 195,718 199,722 203,729 211,743 219,750 223,758 227,767 231,776 239,786 247,794 255,801 263,803 283,803 291,807 303,817 311,824 323,832 343,832 363,826 371,814 383,800 407,780 415,775 419,769 423,763 431,754 439,743 443,738 451,745 459,749 467,749 479,744 487,748 495,755 507,769 511,763 519,756 527,758 535,763 543,767 547,769 551,772 559,782 571,797 575,806 587,817 599,842 603,853 615,882 627,899 639,922 643,928 647,937 655,958 667,981 675,990 683,994 703,989 711,985 715,977 719,968 727,952 735,938 747,916 755,908 767,886 775,876 787,869 799,848 811,841 823,833 831,830 835,826 843,810 855,784 863,773 871,769 875,767 879,762 887,749 899,731 903,729 907,730 915,738 923,746 927,748 939,739 943,738 947,740 955,749 963,755 971,754 987,750 999,755 1007,757 1015,766 1019,776 1023,788 1027,804 1035,833 1043,857 1051,882 1059,904 1067,931 1075,949 1083,949 1087,945 1095,933 1107,925 1115,909 1127,881 1135,860 1143,849 1151,830 1159,807 1163,793 1167,786 1175,783 1191,788 1207,796 1215,803 1227,818 1231,818 1239,806 1251,793 1259,786 1267,781 1271,782 1279,791 1287,803 1295,812 1303,821 1307,823 1315,820 1323,814 1331,805 1339,789 1343,782 1347,773 1351,764 1355,758 1363,747 1367,741 1371,738 1379,741 1387,748 1395,755 1407,761 1415,761 1419,759 1427,764 1435,767 1439,764 1443,760 1451,754";
const pivots = [[40, 265], [303, 332], [438, 170], [446, 328], [734, 526], [886, 365], [1058, 644], [1162, 458], [1286, 665], [1327, 510]];

// long enough to reach the right edge of any window
const FAR = 5000;

const priceY = price => Math.round(172 + (3500 - price) * 1.884);

function path(d, fill, stroke, width) {
    return `<path d="${d}" fill="${fill}" stroke="${stroke}" stroke-width="${width || 1}"/>`;
}

function line(points, color, width) {
    return `<polyline points="${points}" fill="none" stroke="${color}" stroke-width="${width}"/>`;
}

// pixel sized grid dots
function dots(list) {
    return path(list.map(([x, y]) => `M${x} ${y}h1v1h-1z`).join(''), '#c8c8c8', 'none');
}

function row(y) {
    return `<line x1="40" x2="${FAR}" y1="${y}.5" y2="${y}.5" stroke="#c8c8c8" stroke-dasharray="1 3"/>`;
}

function minorColumns() {
    const xs = [47, 63, 75, 79, 91, 107, 123, 139, 155];
    for (let d = FIRST_DAY; d <= LAST_BAR; d += DAY) {
        xs.push(d);
        for (let x = d + 12; x < d + DAY; x += 16) {
            if (x <= LAST_BAR) xs.push(x);
        }
    }
    return xs;
}

function drawPrice() {
    let grid = [], wicks = '', bodies = '', boxes = '', out = '';
    for (let p = 3500; p >= 3250; p -= 50) out += row(priceY(p));
    for (let p = 3525; p >= 3275; p -= 50) {
        minorColumns().forEach(x => grid.push([x, priceY(p)]));
    }
    for (let x = FIRST_DAY; x <= LAST_BAR; x += DAY) {
        for (let p = 3525; p >= 3235; p -= 5) grid.push([x, priceY(p)]);
    }
    out += dots(grid);
    out += `<line x1="0" x2="${FAR}" y1="572.5" y2="572.5" stroke="#f00"/>`;
    out += `<line x1="547.5" x2="547.5" y1="116" y2="677" stroke="#f00"/>`;
    out += line(ma1, '#ff0', 2) + line(ma2, '#f0f', 2);

    runs.forEach(([start, text]) => {
        text.split(',').forEach((bar, i) => {
            const x = FIRST_DAY + (start + i) * BAR;
            const [h, t, b, l] = bar.slice(1).split(' ').map(Number);
            wicks += `M${x + 0.5} ${h}V${t}M${x + 0.5} ${b}V${l}`;
            if (bar[0] === '-') bodies += `M${x - 2} ${t}h5v${b - t}h-5z`;
            else boxes += `M${x - 1.5} ${t + 0.5}h4v${b - t - 1}h-4z`;
        });
    });
    out += path(wicks + boxes, 'none', '#a6caf0') + path(bodies, '#a6caf0', 'none');

    pivots.forEach(([x, y]) => {
        out += `<text x="${x}" y="${y + 6}" text-anchor="middle" fill="#0f0">P</text>`;
    });
    document.getElementById('price').innerHTML = `<g transform="translate(${-LEFT} ${-PRICE_TOP})">${out}</g>`;
}

function drawPriceScale() {
    let d = '', out = '';
    for (let p = 3535; p > 3220; p -= 5) {
        const y = priceY(p) - PRICE_TOP + 0.5;
        if (y < 0) continue;
        d += `M0 ${y}h${p % 50 === 0 ? 8 : p % 25 === 0 ? 4 : 2}`;
        if (p % 50 === 0) out += `<text x="10" y="${y + 6}" fill="#fff">${p}.000</text>`;
    }
    document.getElementById('priceScale').innerHTML = path(d, 'none', '#fff') + out;
}

function drawOsc() {
    let grid = [], bars = '';
    minorColumns().forEach(x => grid.push([x, 848]));
    for (let x = FIRST_DAY; x <= LAST_BAR; x += DAY) {
        for (let y = 704; y < 1000; y += 16) grid.push([x, y]);
    }
    const pts = hist.split(' ').map(p => p.split(',').map(Number));
    let n = 0;
    for (let x = LEFT; x <= LAST_BAR; x += BAR) {
        while (n < pts.length - 2 && pts[n + 1][0] < x) n++;
        const [x1, y1] = pts[n], [x2, y2] = pts[n + 1];
        const y = Math.round(y1 + (y2 - y1) * (x - x1) / (x2 - x1));
        bars += `M${x + 0.5} ${y < 768 ? 769 : 768}V${y}`;
    }
    const out = row(768) + row(928) + dots(grid) + path(bars, 'none', '#800080') +
        line(up, '#008080', 1) + line(down, '#008080', 1) +
        `<line x1="547.5" x2="547.5" y1="702" y2="1100" stroke="#f00"/>`;
    document.getElementById('osc').innerHTML = `<g transform="translate(${-LEFT} ${-OSC_TOP})">${out}</g>`;
}

function drawOscScale() {
    let d = '', out = '';
    for (let v = 10; v >= -70; v -= 5) {
        const y = Math.round(768 - v * 3.2) - OSC_TOP + 0.5;
        d += `M0 ${y}h${v % 50 === 0 ? 8 : v % 25 === 0 ? 4 : 2}`;
        if (v % 50 === 0) out += `<text x="10" y="${y + 6}" fill="#fff">${v.toFixed(1)}</text>`;
    }
    document.getElementById('oscScale').innerHTML = path(d, 'none', '#fff') + out;
}

function drawTimes() {
    const hours = ['15:00', '18:00', '12:00'];
    let html = '<span class="long">10:00</span>';
    for (let i = 0; i < 29; i++) {
        if (i === 7) {
            html += `<span class="cut">${hours[i % 3]}</span>`;
            html += '<span class="time-mark">09/22/22 - 15:30</span><span class="rest">00</span>';
            i += 3;
        } else {
            html += `<span>${hours[i % 3]}</span>`;
        }
    }
    document.getElementById('times').innerHTML = html;
}

drawPrice();
drawPriceScale();
drawOsc();
drawOscScale();
drawTimes();
```
